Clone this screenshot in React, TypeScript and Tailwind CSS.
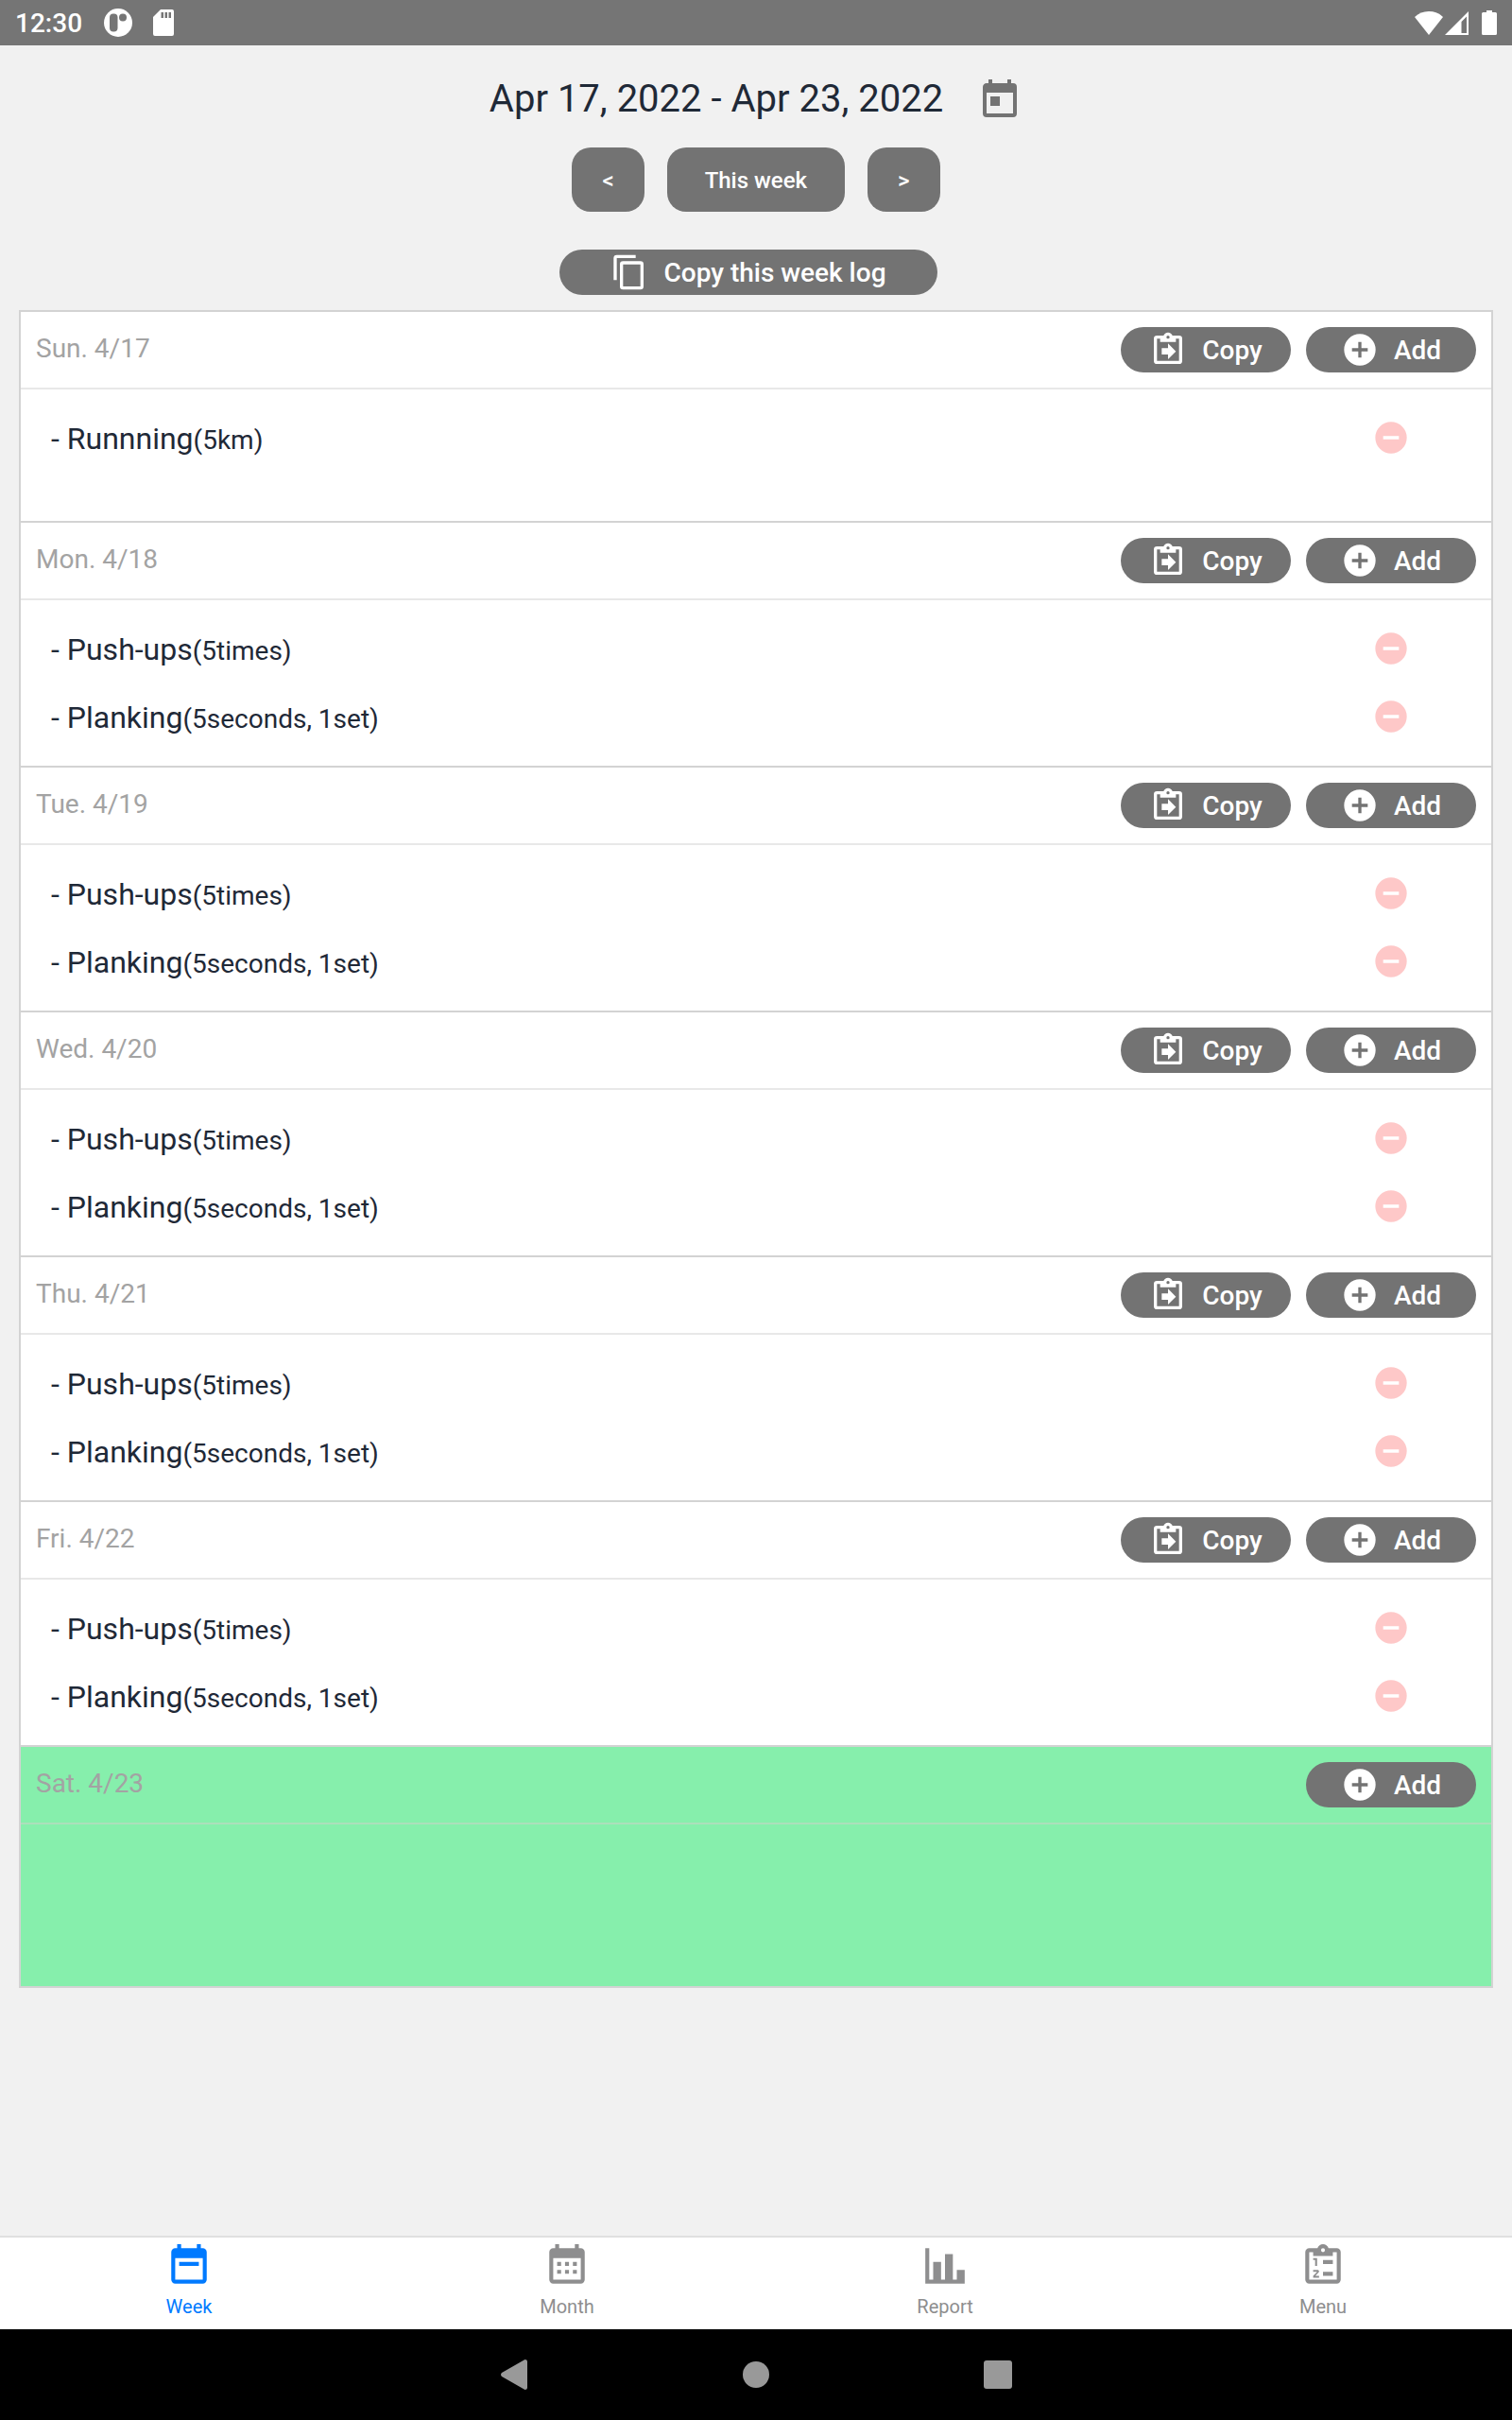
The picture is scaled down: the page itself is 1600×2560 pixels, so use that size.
import type { ReactNode } from 'react'

type IconProps = { path: string; className: string }

function Icon({ path, className }: IconProps) {
  return (
    <svg viewBox="0 0 24 24" fill="currentColor" fillRule="evenodd" className={className} aria-hidden="true">
      <path d={path} />
    </svg>
  )
}

const calendarFrame =
  'M19 19H5V8h14m0-5h-1V1h-2v2H8V1H6v2H5c-1.11 0-2 .9-2 2v14a2 2 0 0 0 2 2h14a2 2 0 0 0 2-2V5a2 2 0 0 0-2-2z'
const clipboardFrame =
  'M19 3h-4.18C14.4 1.84 13.3 1 12 1s-2.4.84-2.82 2H5a2 2 0 0 0-2 2v14a2 2 0 0 0 2 2h14a2 2 0 0 0 2-2V5a2 2 0 0 0-2-2m-7 0a1 1 0 0 1 1 1 1 1 0 0 1-1 1 1 1 0 0 1-1-1 1 1 0 0 1 1-1M7 7h10V5h2v14H5V5h2v2z'

const icons = {
  today: calendarFrame + 'M7 10h5v5H7z',
  week: calendarFrame + 'M7 10h10v2H7z',
  month: calendarFrame + 'M7 10h2v2H7zM11 10h2v2h-2zM15 10h2v2h-2zM7 14h2v2H7zM11 14h2v2h-2zM15 14h2v2h-2z',
  report: 'M22 21H2V3h2v16h2v-9h4v9h2V6h4v13h2v-5h4v7z',
  menu:
    clipboardFrame +
    'M7 8h2v4H8V9H7zM10 18H7v-.92L9 15H7v-1h2.25c.41 0 .75.34.75.75 0 .2-.08.39-.21.52L8.12 17H10zM12 9h5v2h-5zM12 15h5v2h-5z',
  paste: clipboardFrame + 'M12 18v-3H8v-4h4V8l5 5z',
  copy:
    'M19 21H8V7h11m0-2H8a2 2 0 0 0-2 2v14a2 2 0 0 0 2 2h11a2 2 0 0 0 2-2V7a2 2 0 0 0-2-2m-3-4H4a2 2 0 0 0-2 2v14h2V3h12V1z',
  plus: 'M17 13h-4v4h-2v-4H7v-2h4V7h2v4h4m-5-9A10 10 0 0 0 2 12a10 10 0 0 0 10 10 10 10 0 0 0 10-10A10 10 0 0 0 12 2z',
  minus: 'M17 13H7v-2h10m-5-9A10 10 0 0 0 2 12a10 10 0 0 0 10 10 10 10 0 0 0 10-10A10 10 0 0 0 12 2z',
}

const days = [
  { label: 'Sun. 4/17', logs: [['Runnning', '(5km)']] },
  ...['Mon. 4/18', 'Tue. 4/19', 'Wed. 4/20', 'Thu. 4/21', 'Fri. 4/22'].map((label) => ({
    label,
    logs: [
      ['Push-ups', '(5times)'],
      ['Planking', '(5seconds, 1set)'],
    ],
  })),
  { label: 'Sat. 4/23', logs: [] as string[][] },
]

const tabs = [
  { label: 'Week', icon: icons.week, active: true },
  { label: 'Month', icon: icons.month, active: false },
  { label: 'Report', icon: icons.report, active: false },
  { label: 'Menu', icon: icons.menu, active: false },
]

function StatusBar() {
  return (
    <header className="flex h-12 items-center justify-between bg-[#757575] px-4 text-white">
      <div className="flex items-center">
        <span className="pt-0.5 text-[28px] leading-8 font-medium">12:30</span>
        <svg viewBox="0 0 32 32" className="ml-[22px] size-8" aria-hidden="true">
          <circle cx="16" cy="16" r="15" fill="#fff" />
          <rect x="7" y="6.500" width="8.500" height="19" rx="4" fill="#757575" />
          <circle cx="21" cy="10.500" r="4" fill="#757575" />
        </svg>
        <svg viewBox="0 0 24 28" fill="#fff" fillRule="evenodd" className="ml-5 h-7 w-6" aria-hidden="true">
          <path d="M9 0h12a2 2 0 0 1 2 2v24a2 2 0 0 1-2 2H3a2 2 0 0 1-2-2V8zM9.500 3v6H12V3zM13.500 3v6H16V3zM17.500 3v6H20V3z" />
        </svg>
      </div>
      <div className="flex items-center">
        <svg viewBox="0 0 32 28" fill="#fff" className="h-7 w-8" aria-hidden="true">
          <path d="M16 27 1 8C5 4 10 2 16 2s11 2 15 6z" />
        </svg>
        <svg viewBox="0 0 28 28" fill="#fff" fillRule="evenodd" className="size-7" aria-hidden="true">
          <path d="M1 27 26 2v25zM18.500 13v12H24V7.500z" />
        </svg>
        <svg viewBox="0 0 16 28" fill="#fff" className="ml-3 h-7 w-4" aria-hidden="true">
          <path d="M5 1h6v2h3.500A1.500 1.500 0 0 1 16 4.500v21a1.500 1.500 0 0 1-1.500 1.500h-13A1.500 1.500 0 0 1 0 25.500v-21A1.500 1.500 0 0 1 1.500 3H5z" />
        </svg>
      </div>
    </header>
  )
}

function PillButton({ icon, wide = false, children }: { icon: string; wide?: boolean; children: ReactNode }) {
  return (
    <button
      type="button"
      className={`flex h-12 items-center justify-center gap-4 rounded-full bg-[#737373] text-[28px] leading-8 font-medium text-white ${wide ? 'w-[400px]' : 'w-[180px]'}`}
    >
      <Icon path={icon} className="size-10" />
      <span className="pt-0.5">{children}</span>
    </button>
  )
}

function StepButton({ wide = false, label, children }: { wide?: boolean; label: string; children: ReactNode }) {
  return (
    <button
      type="button"
      aria-label={label}
      className={`flex h-[68px] items-center justify-center rounded-[20px] bg-[#737373] pt-0.5 text-2xl font-medium text-white ${wide ? 'px-10' : 'px-8'}`}
    >
      {children}
    </button>
  )
}

function Day({ label, logs }: { label: string; logs: string[][] }) {
  const today = logs.length === 0
  return (
    <section className={`border-b-2 border-[#d3d3d3] ${today ? 'bg-[#86efac]' : 'bg-white'}`}>
      <div className={`flex items-start border-b-2 p-4 ${today ? 'border-[#acdfbb]' : 'border-[#e8e8e8]'}`}>
        <h2 className="flex-1 text-[28px] leading-[46px] text-[#a3a3a3]">{label}</h2>
        <div className="flex gap-4">
          {!today && <PillButton icon={icons.paste}>Copy</PillButton>}
          <PillButton icon={icons.plus}>Add</PillButton>
        </div>
      </div>
      <ul className={`pt-[15px] ${today ? 'min-h-[171px]' : 'min-h-[139px] pb-4'}`}>
        {logs.map(([name, amount]) => (
          <li key={name} className="flex h-[72px] items-center justify-between pr-[86px] pl-8">
            <p className="pt-1 text-[32px] leading-[42px] text-[#1f2937]">
              - {name}
              <span className="text-[28px]">{amount}</span>
            </p>
            <button type="button" aria-label={`Remove ${name}`} className="text-[#fec8c8]">
              <Icon path={icons.minus} className="size-10" />
            </button>
          </li>
        ))}
      </ul>
    </section>
  )
}

export default function App() {
  return (
    <div className="flex min-h-screen flex-col bg-[#f1f1f1] font-['Roboto',sans-serif]">
      <StatusBar />
      <main className="flex flex-1 flex-col px-5 pt-8">
        <div className="flex h-[52px] items-center justify-center gap-9">
          <h1 className="pb-0.5 text-[40px] leading-[48px] text-[#1f2937]">Apr 17, 2022 - Apr 23, 2022</h1>
          <button type="button" aria-label="Pick a date" className="text-[#737373]">
            <Icon path={icons.today} className="size-12" />
          </button>
        </div>
        <div className="mt-6 flex justify-center gap-6">
          <StepButton label="Previous week">&lt;</StepButton>
          <StepButton label="This week" wide>
            This week
          </StepButton>
          <StepButton label="Next week">&gt;</StepButton>
        </div>
        <div className="mt-10 flex justify-center pr-4">
          <PillButton icon={icons.copy} wide>
            Copy this week log
          </PillButton>
        </div>
        <div className="mt-4 border-x-2 border-t-2 border-[#d3d3d3]">
          {days.map((day) => (
            <Day key={day.label} {...day} />
          ))}
        </div>
      </main>
      <nav className="grid grid-cols-4 border-t-2 border-[#e0e0e0] bg-white">
        {tabs.map((tab) => (
          <a
            key={tab.label}
            href={`#${tab.label.toLowerCase()}`}
            className={`flex h-[97px] flex-col items-center pt-[5px] text-xl leading-6 ${tab.active ? 'text-[#007aff]' : 'text-[#8e8e8f]'}`}
          >
            <Icon path={tab.icon} className="size-[50px]" />
            <span className="mt-1.5">{tab.label}</span>
          </a>
        ))}
      </nav>
      <footer className="flex h-24 items-center justify-center gap-48 bg-black text-[#999999]">
        <button type="button" aria-label="Back" className="flex w-16 justify-center">
          <svg viewBox="0 0 32 32" fill="currentColor" className="size-8" aria-hidden="true">
            <path d="M27.500 0Q30 0 30 2v28q0 2-2.500 2L3 18q-2-2 0-4z" />
          </svg>
        </button>
        <button type="button" aria-label="Home" className="flex w-16 justify-center">
          <span className="size-7 rounded-full bg-[#999999]" />
        </button>
        <button type="button" aria-label="Recent apps" className="flex w-16 justify-center">
          <span className="size-[30px] rounded-[3px] bg-[#999999]" />
        </button>
      </footer>
    </div>
  )
}
